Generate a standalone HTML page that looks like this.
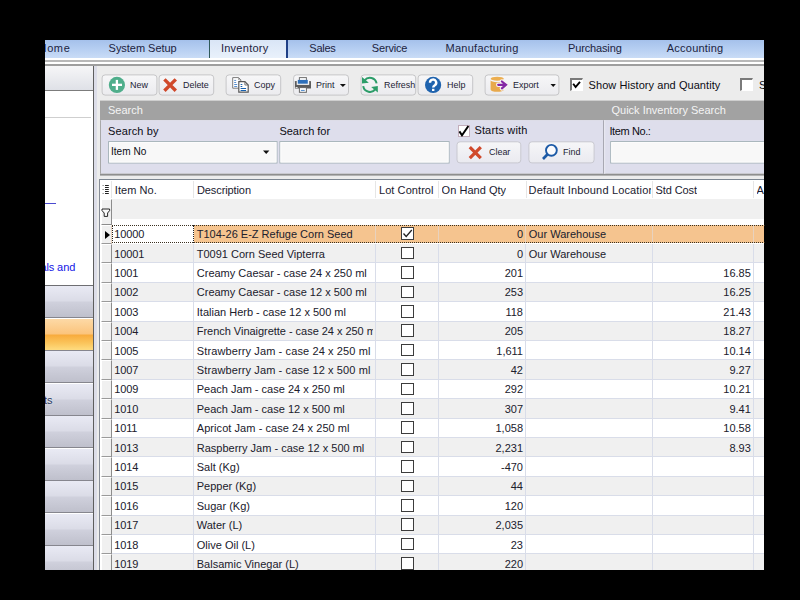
<!DOCTYPE html>
<html><head><meta charset="utf-8"><title>Inventory</title>
<style>
html,body{margin:0;padding:0;background:#000;}
body{width:800px;height:600px;overflow:hidden;position:relative;font-family:"Liberation Sans",sans-serif;font-size:11px;color:#1a1a2a;}
#app{position:absolute;left:0;top:0;width:800px;height:600px;overflow:hidden;background:#ececec;}
.blk{position:absolute;background:#000;}
.abs{position:absolute;}
/* tab bar */
#tabs{position:absolute;left:45px;top:40px;width:719px;height:18px;background:linear-gradient(#a5c1eb 0%,#b4cdf1 45%,#c9dcf6 100%);}
#tabs span{position:absolute;top:1px;line-height:14px;font-size:11px;color:#1c2340;white-space:nowrap;}
#tabsel{position:absolute;left:209px;top:40px;width:79px;height:18px;background:linear-gradient(#d9e5f6,#e9f1fb);border-left:1px solid #2f5a5a;border-right:2px solid #1f3f86;box-sizing:border-box;}
#band{position:absolute;left:45px;top:58px;width:719px;height:8px;background:#fff;}
#band i{position:absolute;left:0;width:719px;display:block;}
/* sidebar */
#side{position:absolute;left:45px;top:66px;width:47.5px;height:504px;background:#fff;}
#sidehdr{position:absolute;left:0;top:0;width:47.5px;height:24px;background:linear-gradient(#f6f6f8,#dfe1e7);border-bottom:1.5px solid #7c7c7c;}
.nav{position:absolute;left:0;width:47.5px;height:31.3px;background:linear-gradient(#e9eaf4 0%,#dbdce7 47%,#cfd0dc 53%,#bfc0cc 100%);border-bottom:1.2px solid #86868e;}
.nav.on{background:linear-gradient(#fdd9a6 0%,#fbc47c 48%,#f8ab3c 52%,#fbc55c 78%,#fedc80 100%);}
#vline{position:absolute;left:92.5px;top:65.5px;width:1.6px;height:505px;background:#5e5e5e;}
#vstrip{position:absolute;left:94px;top:66px;width:3.2px;height:504px;background:#dcdde8;}
/* toolbar */
.btn{position:absolute;top:74.4px;height:21.2px;box-sizing:border-box;border:1px solid #d4d4d4;border-radius:3px;background:linear-gradient(#f7f7f7,#ececec);}
.btn span,.btn2 span{position:absolute;top:3.5px;font-size:10px;line-height:12px;color:#1a1a2a;white-space:nowrap;}
.btn svg,.btn2 svg{position:absolute;}
.btn2{position:absolute;top:141.6px;height:21.6px;box-sizing:border-box;border:1px solid #d4d4dc;border-radius:3px;background:linear-gradient(#f6f6f8,#ececf0);}
.dd{position:absolute;width:0;height:0;border-left:3px solid transparent;border-right:3px solid transparent;border-top:3.5px solid #111;}
.chk{position:absolute;width:13px;height:13px;box-sizing:border-box;background:#fff;border:2px solid #7a7a7a;border-right:1.4px solid #fff;border-bottom:1.4px solid #fff;}
.bt{position:absolute;top:78.7px;font-size:9.5px;line-height:12px;color:#1c1c34;white-space:nowrap;transform:scaleX(0.94);transform-origin:0 0;}
/* search */
#shdr{position:absolute;left:100px;top:100.6px;width:664px;height:19.6px;background:#a2a2a2;}
#shdr span{position:absolute;top:3.5px;font-size:11px;line-height:13px;color:#f4f4f4;white-space:nowrap;}
#sbody{position:absolute;left:100px;top:120.2px;width:664px;height:53.6px;background:#dedeec;border-bottom:1.6px solid #8a8a8a;}
.lbl{position:absolute;font-size:11px;line-height:13px;white-space:nowrap;color:#0c0c14;}
.inp{position:absolute;top:141.6px;height:21.6px;box-sizing:border-box;background:#f8f8f8;border:1px solid #b8c4cc;border-top-color:#a8b8c0;}
/* grid */
#grid{position:absolute;left:99.4px;top:179.2px;width:665px;height:391px;background:#fff;border-left:1px solid #868c96;border-top:1px solid #7c8692;box-sizing:border-box;}
#ghdr{position:absolute;left:100.6px;top:180.4px;width:664px;height:18.6px;background:#fff;}
#ghdr span{position:absolute;top:3.8px;line-height:13px;font-size:11px;color:#1a1a30;white-space:nowrap;overflow:hidden;}
#ghdr i{position:absolute;top:1px;height:17px;width:1px;background:#e6e6e6;}
#gflt{position:absolute;left:100.6px;top:199px;width:664px;height:20.2px;background:#f0f0f0;}
.r{position:absolute;left:100.6px;width:664px;height:19.4px;background:#fff;box-sizing:border-box;border-bottom:1.2px solid #d9dde9;}
.r.alt{background:#f0f0f0;}
.r.sel{background:#f5c48f;border-bottom:none;height:18.4px;}
.c{position:absolute;top:0;height:100%;box-sizing:border-box;border-right:1.2px solid #d9dde9;line-height:19px;padding-top:0.6px;white-space:nowrap;overflow:hidden;color:#20202c;}
.r.sel .c{line-height:18px;border-right-color:#e8d2be;}
.ind{left:0;width:11.2px;background:#f0f0f0;border-left:1px solid #fff;border-top:1px solid #fff;border-right:1.2px solid #8c8c8c;border-bottom:1.2px solid #9a9a9a;height:19.4px;}
.c1{left:11.2px;width:82.4px;padding-left:2.4px;letter-spacing:-0.12px;}
.c2{left:93.6px;width:178.6px;padding-left:2.6px;border-right:none;}
.c3{left:274px;width:64px;border-left:1.2px solid #d9dde9;}
.r.sel .c3{border-left-color:#e8d2be;}
.c4{left:338px;width:87.6px;text-align:right;padding-right:2.2px;}
.c5{left:425.6px;width:126.4px;padding-left:2.6px;}
.c6{left:552px;width:101px;text-align:right;padding-right:1.8px;}
.c7{left:653px;width:20px;border-right:none;}
.cb{position:absolute;left:25.6px;top:2.8px;width:13px;height:12.6px;box-sizing:border-box;border:1.2px solid #3c3c3c;background:#fff;display:block;}
.cb svg{position:absolute;left:-1.2px;top:-1.4px;}
.arr{position:absolute;left:3.2px;top:5.6px;width:0;height:0;border-top:4px solid transparent;border-bottom:4px solid transparent;border-left:5.4px solid #000;}
.r.sel .c1{background:#fff;border-left:1px dotted #222;border-right:1px dotted #222;padding-left:1.4px;}

.chk2{position:absolute;width:12px;height:12px;box-sizing:border-box;background:#fff;border:1px solid #c2aebb;}
#gfltind{position:absolute;left:100.6px;top:199px;width:11.2px;height:26px;box-sizing:border-box;background:#f0f0f0;border-left:1px solid #fff;border-top:1px solid #fff;border-right:1.2px solid #8c8c8c;border-bottom:1.2px solid #8c8c8c;}
.r.sel::before,.r.sel::after{content:"";position:absolute;left:11.2px;right:0;height:1px;z-index:3;background:repeating-linear-gradient(90deg,#3a3020 0,#3a3020 1px,transparent 1px,transparent 2px);}
.r.sel::before{top:0.4px;}
.r.sel::after{bottom:0;}
.sh{position:absolute;top:104.4px;font-size:11px;line-height:13px;color:#f4f4f4;white-space:nowrap;}

</style></head>
<body>
<div id="app">
<div id="tabs">
<span style="left:-6.4px;letter-spacing:0.6px">Home</span>
<span style="left:63.6px;letter-spacing:-0.03px">System Setup</span>
<span style="left:264.3px;letter-spacing:-0.25px">Sales</span>
<span style="left:326.8px;letter-spacing:-0.17px">Service</span>
<span style="left:400.6px;letter-spacing:0.25px">Manufacturing</span>
<span style="left:523px;letter-spacing:-0.14px">Purchasing</span>
<span style="left:621.8px;letter-spacing:0.22px">Accounting</span>
</div>
<div id="tabsel"><span class="abs" style="left:10.9px;top:1px;line-height:14px;font-size:11px;color:#1c2340;letter-spacing:0.27px">Inventory</span></div>
<div id="band"><i style="top:2px;height:1.5px;background:#b8b8b8"></i><i style="top:6px;height:1.5px;background:#9e9e9e"></i></div>

<div id="side">
<div id="sidehdr"></div>
<div class="abs" style="left:0;top:51px;width:46px;height:1px;background:#cfcfcf"></div>
<div class="abs" style="left:0;top:136.6px;width:10.6px;height:1px;background:#4a4ad0"></div>
<span class="abs" style="left:-4.6px;top:195.4px;font-size:11px;line-height:13px;color:#1414e6;white-space:nowrap;letter-spacing:-0.1px">als and</span>
<div class="abs" style="left:0;top:219.2px;width:47.5px;height:1px;background:#6e6e72"></div>
<div class="nav" style="top:220px"></div>
<div class="nav on" style="top:252.5px"></div>
<div class="nav" style="top:285px"></div>
<div class="nav" style="top:317.5px"><span class="abs" style="left:-1px;top:10.8px;font-size:11px;line-height:13px;color:#24345a;text-shadow:0 0 1.5px #fff">ts</span></div>
<div class="nav" style="top:350px"></div>
<div class="nav" style="top:382.5px"></div>
<div class="nav" style="top:415px"></div>
<div class="nav" style="top:447.5px"></div>
<div class="nav" style="top:480px"></div>
</div>
<div id="vline"></div>
<div id="vstrip"></div>

<!-- search bg -->

<!-- box underlay -->
<svg class="abs" style="left:0;top:0" width="800" height="600" viewBox="0 0 800 600">
<defs>
<linearGradient id="bg1" x1="0" y1="0" x2="0" y2="1"><stop offset="0" stop-color="#f7f7f8"/><stop offset="1" stop-color="#ebebee"/></linearGradient>
<linearGradient id="bg2" x1="0" y1="0" x2="0" y2="1"><stop offset="0" stop-color="#f6f6f8"/><stop offset="1" stop-color="#eaeaf0"/></linearGradient>
</defs>
<rect x="100" y="100.6" width="664" height="19.6" fill="#a2a2a2"/>
<rect x="100" y="120.2" width="664" height="53.5" fill="#dedeec"/>
<rect x="100" y="173.7" width="664" height="1.9" fill="#8e8e8e"/>
<g fill="url(#bg1)" stroke="#c6c6c8" stroke-width="1">
<rect x="102.1" y="74.9" width="54.8" height="20.2" rx="3"/>
<rect x="159.1" y="74.9" width="54.6" height="20.2" rx="3"/>
<rect x="226.1" y="74.9" width="54.6" height="20.2" rx="3"/>
<rect x="293.6" y="74.9" width="54.9" height="20.2" rx="3"/>
<rect x="361.1" y="74.9" width="54.6" height="20.2" rx="3"/>
<rect x="418.1" y="74.9" width="54.6" height="20.2" rx="3"/>
<rect x="485.1" y="74.9" width="73.8" height="20.2" rx="3"/>
</g>
<g fill="url(#bg2)" stroke="#c8c8d0" stroke-width="1">
<rect x="457" y="141.8" width="63.8" height="21.1" rx="3"/>
<rect x="528.9" y="141.8" width="65.2" height="21.1" rx="3"/>
</g>
<g fill="#f8f8f8" stroke="#a4b2b8" stroke-width="1">
<rect x="108.6" y="141.6" width="168.4" height="21.4"/>
<rect x="279.9" y="141.6" width="169.2" height="21.4"/>
<rect x="610.7" y="141.6" width="160" height="21.4"/>
</g>
<g fill="none" stroke="#fdfdfd" stroke-width="1">
<rect x="109.6" y="142.6" width="166.4" height="19.4"/>
<rect x="280.9" y="142.6" width="167.2" height="19.4"/>
<rect x="611.7" y="142.6" width="158" height="19.4"/>
</g>
<rect x="603" y="120.2" width="1.2" height="53.6" fill="#a8a8b2"/>
<rect x="604.2" y="120.2" width="1" height="53.6" fill="#ececf4"/>
<rect x="100" y="120.2" width="1" height="53.6" fill="#a8a8a8"/>
<!-- dropdown arrows -->
<path d="M339.9 83.9 H345.9 L342.9 86.9 Z M550.5 83.9 H555.9 L553.2 86.9 Z M263 150.6 H269.4 L266.2 154 Z" fill="#111"/>
</svg>

<!-- toolbar text -->
<span class="bt" style="left:129.6px">New</span>
<span class="bt" style="left:183.4px">Delete</span>
<span class="bt" style="left:253.8px">Copy</span>
<span class="bt" style="left:316.2px">Print</span>
<span class="bt" style="left:383.5px">Refresh</span>
<span class="bt" style="left:446.9px">Help</span>
<span class="bt" style="left:513.1px">Export</span>
<i class="chk" style="left:570px;top:77.8px"><svg viewBox="0 0 13 13" width="13" height="13" style="position:absolute;left:-2px;top:-2px"><path d="M3.2 5.8 L5.6 9 L10 3.8" fill="none" stroke="#000" stroke-width="1.9"/></svg></i>
<span class="lbl" style="left:588.6px;top:78.6px;letter-spacing:0.06px">Show History and Quantity</span>
<i class="chk" style="left:740.4px;top:77.8px"></i>
<span class="lbl" style="left:759px;top:78.6px">S</span>

<!-- search -->
<span class="sh" style="left:108px">Search</span><span class="sh" style="left:611.5px">Quick Inventory Search</span>
<span class="lbl" style="left:108px;top:124.5px;letter-spacing:0.12px">Search by</span>
<span class="lbl" style="left:279.4px;top:124.5px">Search for</span>
<span class="lbl" style="left:111px;top:145.3px;font-size:10.5px;transform:scaleX(0.96);transform-origin:0 0">Item No</span>
<i class="chk2" style="left:458px;top:125px"></i>
<svg class="abs" style="left:456px;top:122px" width="16" height="16" viewBox="456 122 16 16"><path d="M459.4 131.4 L462 135.2 L468.4 126" fill="none" stroke="#000" stroke-width="2"/></svg>
<span class="lbl" style="left:474.4px;top:124px;letter-spacing:0.16px">Starts with</span>
<span class="bt" style="left:488.5px;top:145.6px">Clear</span>
<span class="bt" style="left:563.2px;top:145.6px">Find</span>
<span class="lbl" style="left:609.4px;top:124.5px;letter-spacing:-0.39px">Item No.:</span>

<!-- grid -->
<div id="grid"></div>
<div id="ghdr">
<span style="left:14.2px;letter-spacing:0.06px">Item No.</span>
<span style="left:96.4px;letter-spacing:-0.1px">Description</span>
<span style="left:278.4px;letter-spacing:0.07px">Lot Control</span>
<span style="left:341px;letter-spacing:0.03px">On Hand Qty</span>
<span style="left:428px;width:122px;letter-spacing:0.16px">Default Inbound Location</span>
<span style="left:555px;letter-spacing:-0.12px">Std Cost</span>
<span style="left:656px">A</span>
<i style="left:10.6px"></i><i style="left:92.8px"></i><i style="left:274.6px"></i><i style="left:337.4px"></i><i style="left:425px"></i><i style="left:551.4px"></i><i style="left:652.4px"></i>
</div>
<div id="gflt"></div>
<div id="gfltind"></div>
<div id="rows">
<div class="r sel" style="top:224.6px"><span class="c ind"><i class="arr"></i></span><span class="c c1">10000</span><span class="c c2">T104-26 E-Z Refuge Corn Seed</span><span class="c c3"><i class="cb"><svg viewBox="0 0 13 13" width="13" height="13"><path d="M2.5 6.5 L5.2 9.5 L10.8 3" fill="none" stroke="#222" stroke-width="1.3"/></svg></i></span><span class="c c4">0</span><span class="c c5">Our Warehouse</span><span class="c c6"></span><span class="c c7"></span></div>
<div class="r alt" style="top:244.0px"><span class="c ind"></span><span class="c c1">10001</span><span class="c c2">T0091 Corn Seed Vipterra</span><span class="c c3"><i class="cb"></i></span><span class="c c4">0</span><span class="c c5">Our Warehouse</span><span class="c c6"></span><span class="c c7"></span></div>
<div class="r" style="top:263.4px"><span class="c ind"></span><span class="c c1">1001</span><span class="c c2">Creamy Caesar - case 24 x 250 ml</span><span class="c c3"><i class="cb"></i></span><span class="c c4">201</span><span class="c c5"></span><span class="c c6">16.85</span><span class="c c7"></span></div>
<div class="r alt" style="top:282.8px"><span class="c ind"></span><span class="c c1">1002</span><span class="c c2">Creamy Caesar - case 12 x 500 ml</span><span class="c c3"><i class="cb"></i></span><span class="c c4">253</span><span class="c c5"></span><span class="c c6">16.25</span><span class="c c7"></span></div>
<div class="r" style="top:302.2px"><span class="c ind"></span><span class="c c1">1003</span><span class="c c2">Italian Herb - case 12 x 500 ml</span><span class="c c3"><i class="cb"></i></span><span class="c c4">118</span><span class="c c5"></span><span class="c c6">21.43</span><span class="c c7"></span></div>
<div class="r alt" style="top:321.6px"><span class="c ind"></span><span class="c c1">1004</span><span class="c c2" style="letter-spacing:-0.03px">French Vinaigrette - case 24 x 250 ml</span><span class="c c3"><i class="cb"></i></span><span class="c c4">205</span><span class="c c5"></span><span class="c c6">18.27</span><span class="c c7"></span></div>
<div class="r" style="top:341.0px"><span class="c ind"></span><span class="c c1">1005</span><span class="c c2" style="letter-spacing:0.115px">Strawberry Jam - case 24 x 250 ml</span><span class="c c3"><i class="cb"></i></span><span class="c c4">1,611</span><span class="c c5"></span><span class="c c6">10.14</span><span class="c c7"></span></div>
<div class="r alt" style="top:360.4px"><span class="c ind"></span><span class="c c1">1007</span><span class="c c2" style="letter-spacing:0.115px">Strawberry Jam - case 12 x 500 ml</span><span class="c c3"><i class="cb"></i></span><span class="c c4">42</span><span class="c c5"></span><span class="c c6">9.27</span><span class="c c7"></span></div>
<div class="r" style="top:379.8px"><span class="c ind"></span><span class="c c1">1009</span><span class="c c2">Peach Jam - case 24 x 250 ml</span><span class="c c3"><i class="cb"></i></span><span class="c c4">292</span><span class="c c5"></span><span class="c c6">10.21</span><span class="c c7"></span></div>
<div class="r alt" style="top:399.2px"><span class="c ind"></span><span class="c c1">1010</span><span class="c c2">Peach Jam - case 12 x 500 ml</span><span class="c c3"><i class="cb"></i></span><span class="c c4">307</span><span class="c c5"></span><span class="c c6">9.41</span><span class="c c7"></span></div>
<div class="r" style="top:418.6px"><span class="c ind"></span><span class="c c1">1011</span><span class="c c2" style="letter-spacing:0.06px">Apricot Jam - case 24 x 250 ml</span><span class="c c3"><i class="cb"></i></span><span class="c c4">1,058</span><span class="c c5"></span><span class="c c6">10.58</span><span class="c c7"></span></div>
<div class="r alt" style="top:438.0px"><span class="c ind"></span><span class="c c1">1013</span><span class="c c2">Raspberry Jam - case 12 x 500 ml</span><span class="c c3"><i class="cb"></i></span><span class="c c4">2,231</span><span class="c c5"></span><span class="c c6">8.93</span><span class="c c7"></span></div>
<div class="r" style="top:457.4px"><span class="c ind"></span><span class="c c1">1014</span><span class="c c2">Salt (Kg)</span><span class="c c3"><i class="cb"></i></span><span class="c c4">-470</span><span class="c c5"></span><span class="c c6"></span><span class="c c7"></span></div>
<div class="r alt" style="top:476.8px"><span class="c ind"></span><span class="c c1">1015</span><span class="c c2">Pepper (Kg)</span><span class="c c3"><i class="cb"></i></span><span class="c c4">44</span><span class="c c5"></span><span class="c c6"></span><span class="c c7"></span></div>
<div class="r" style="top:496.2px"><span class="c ind"></span><span class="c c1">1016</span><span class="c c2">Sugar (Kg)</span><span class="c c3"><i class="cb"></i></span><span class="c c4">120</span><span class="c c5"></span><span class="c c6"></span><span class="c c7"></span></div>
<div class="r alt" style="top:515.6px"><span class="c ind"></span><span class="c c1">1017</span><span class="c c2">Water (L)</span><span class="c c3"><i class="cb"></i></span><span class="c c4">2,035</span><span class="c c5"></span><span class="c c6"></span><span class="c c7"></span></div>
<div class="r" style="top:535.0px"><span class="c ind"></span><span class="c c1">1018</span><span class="c c2">Olive Oil (L)</span><span class="c c3"><i class="cb"></i></span><span class="c c4">23</span><span class="c c5"></span><span class="c c6"></span><span class="c c7"></span></div>
<div class="r alt" style="top:554.4px"><span class="c ind"></span><span class="c c1">1019</span><span class="c c2">Balsamic Vinegar (L)</span><span class="c c3"><i class="cb"></i></span><span class="c c4">220</span><span class="c c5"></span><span class="c c6"></span><span class="c c7"></span></div>
</div>
<svg class="abs" style="left:0;top:0" width="800" height="600" viewBox="0 0 800 600">
<!-- New -->
<circle cx="116.9" cy="84.9" r="8.1" fill="#4fae8b"/>
<rect x="112" y="83.7" width="10" height="2.3" fill="#fff"/>
<rect x="115.75" y="79.9" width="2.3" height="10" fill="#fff"/>
<!-- Delete -->
<path d="M164.4 79.4 L175.8 90.8 M175.8 79.4 L164.4 90.8" stroke="#d0492b" stroke-width="3.4" fill="none"/>
<!-- Copy -->
<path d="M232.7 77.6 H238.6 L240.8 79.8 V88.2 H232.7 Z" fill="#fff" stroke="#7c7c7c" stroke-width="1"/>
<path d="M238.6 77.6 V79.8 H240.8" fill="none" stroke="#8a8a8a" stroke-width="0.8"/>
<path d="M234.2 80.4 h2 M234.2 82.5 h2 M234.2 84.5 h3 M234.2 86.5 h3" stroke="#5a90d0" stroke-width="1"/>
<path d="M238.8 81.7 H244.9 L248.2 85 V92.1 H238.8 Z" fill="#fff" stroke="#585858" stroke-width="1.2"/>
<path d="M244.9 81.7 V85 H248.2" fill="none" stroke="#6a6a6a" stroke-width="0.9"/>
<path d="M240.6 84.5 h1.7 M240.6 86.5 h1.7 M240.6 88.5 h5.5 M240.6 90.5 h5.5" stroke="#1560b0" stroke-width="1.2"/>
<!-- Print -->
<rect x="294.9" y="81" width="16.1" height="7.6" rx="0.6" fill="#5c5c5c"/>
<rect x="296.7" y="80.4" width="12.5" height="4.5" fill="#f6f6f6"/>
<rect x="299.4" y="77.6" width="7" height="4" fill="#fff" stroke="#707070" stroke-width="1"/>
<rect x="297.8" y="79.9" width="10" height="3.8" fill="#2d6fba"/>
<rect x="295.6" y="87.1" width="2" height="0.9" fill="#f0f0f0"/>
<rect x="299.4" y="87.6" width="7" height="4.7" fill="#fff" stroke="#666" stroke-width="1"/>
<rect x="300.9" y="89.9" width="3.8" height="1" fill="#4a88cc"/>
<!-- Refresh -->
<g fill="none" stroke="#2d9d69" stroke-width="2">
<path d="M364.6 80.4 A6.8 6.8 0 0 1 376.6 83.4"/>
<path d="M363.2 86.2 A6.8 6.8 0 0 0 375.6 88.8"/>
</g>
<path d="M362 77 V83.6 L368.8 82.8 Z" fill="#2d9d69"/>
<path d="M377.8 86 V92.6 L371.2 87 Z" fill="#2d9d69"/>
<!-- Help -->
<circle cx="433.1" cy="84.9" r="8.1" fill="#1f63ae"/>
<path d="M430 82.8 A3.1 3.1 0 1 1 434.8 85.2 Q433.2 86.2 433.2 87.6" fill="none" stroke="#fff" stroke-width="2.4"/>
<rect x="432" y="88.8" width="2.4" height="2.2" fill="#fff"/>
<!-- Export -->
<ellipse cx="497.2" cy="78.7" rx="6.6" ry="2" fill="#ecae50"/>
<path d="M490.6 80.2 A6.6 2 0 0 0 503.8 80.2 V89.5 A6.6 2.3 0 0 1 490.6 89.5 Z" fill="#e8a94c"/>
<path d="M498.2 84.8 H505.4 M501.9 81.5 L506 84.8 L501.9 88.3" fill="none" stroke="#f7f3f5" stroke-width="4.4" stroke-linecap="round" stroke-linejoin="round"/>
<path d="M498.2 84.8 H505.4 M501.9 81.5 L506 84.8 L501.9 88.3" fill="none" stroke="#8428a6" stroke-width="2.2" stroke-linecap="round" stroke-linejoin="miter"/>
<!-- Clear X -->
<path d="M469.8 147.2 L480.8 158.2 M480.8 147.2 L469.8 158.2" stroke="#d0492b" stroke-width="3.2" fill="none"/>
<!-- Find -->
<circle cx="551.4" cy="150.3" r="5.4" fill="#fbfbfd" stroke="#1c5aa6" stroke-width="1.9"/>
<path d="M547.6 154.3 L543 159" stroke="#1c5aa6" stroke-width="2.7" fill="none"/>
<!-- grid header icon -->
<g fill="#222">
<rect x="105" y="185" width="3.8" height="1"/><rect x="105" y="187" width="3.8" height="1"/><rect x="105" y="189" width="3.8" height="1"/><rect x="105" y="191" width="3.8" height="1"/><rect x="105" y="193" width="3.8" height="1"/>
<rect x="102.6" y="185" width="1" height="1" fill="#666"/><rect x="102.6" y="189" width="1" height="1" fill="#666"/><rect x="102.6" y="193" width="1" height="1" fill="#666"/>
</g>
<!-- funnel -->
<path d="M102 209 H109.6 V210.6 L107.6 213 V216.4 H104.2 V213 L102 210.6 Z" fill="#fafafa" stroke="#111" stroke-width="0.9"/>
</svg>
</div>
<div class="blk" style="left:0;top:0;width:800px;height:40px"></div><div class="blk" style="left:0;top:570px;width:800px;height:30px"></div><div class="blk" style="left:0;top:0;width:45px;height:600px"></div><div class="blk" style="left:764px;top:0;width:36px;height:600px"></div>
</body></html>
